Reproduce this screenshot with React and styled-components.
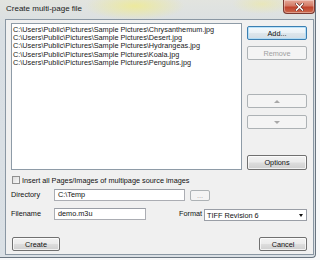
import React from 'react';
import styled, { createGlobalStyle, css } from 'styled-components';

const GlobalStyle = createGlobalStyle`
  html, body {
    margin: 0;
    padding: 0;
    background: #ffffff;
  }
  body {
    font-family: "Liberation Sans", Arial, sans-serif;
    color: #111;
  }
`;

const files = [
  'C:\\Users\\Public\\Pictures\\Sample Pictures\\Chrysanthemum.jpg',
  'C:\\Users\\Public\\Pictures\\Sample Pictures\\Desert.jpg',
  'C:\\Users\\Public\\Pictures\\Sample Pictures\\Hydrangeas.jpg',
  'C:\\Users\\Public\\Pictures\\Sample Pictures\\Koala.jpg',
  'C:\\Users\\Public\\Pictures\\Sample Pictures\\Penguins.jpg'
];

const Desktop = styled.div`
  width: 320px;
  height: 260px;
  overflow: hidden;
  background: #f7f8f9;
`;

const Window = styled.div`
  width: 316px;
  height: 258px;
  box-sizing: border-box;
  display: flex;
  flex-direction: column;
  border-right: 1px solid #6a7580;
  border-bottom: 1px solid #6a7580;
  border-bottom-right-radius: 4px;
  background:
    radial-gradient(ellipse 50px 14px at 135px 6px, rgba(238, 234, 150, 0.9), rgba(238, 234, 150, 0) 100%),
    radial-gradient(ellipse 30px 10px at 262px 4px, rgba(236, 232, 170, 0.7), rgba(236, 232, 170, 0) 100%),
    linear-gradient(#e2e4df, #d8dee3 30px, #dae0e5);
`;

const TitleBar = styled.div`
  height: 19px;
  display: flex;
  align-items: flex-start;
  padding-left: 6px;
  flex-shrink: 0;
`;

const Title = styled.span`
  font-size: 8px;
  line-height: 18px;
  color: #1a1a1a;
`;

const CloseButton = styled.div`
  margin-left: auto;
  width: 32px;
  height: 14px;
  box-sizing: border-box;
  border: 1px solid #7a3a32;
  border-top: none;
  border-radius: 0 0 4px 4px;
  background: linear-gradient(#e6a898, #d37a66 45%, #c0422c 55%, #cc6a4e);
  display: flex;
  align-items: center;
  justify-content: center;
  box-shadow: inset 0 0 0 1px rgba(255, 255, 255, 0.35);
`;

const Client = styled.div`
  flex: 1;
  margin: 0 1px 2px 5px;
  border: 1px solid #8a97a3;
  background: #f0f0f0;
  display: flex;
  flex-direction: column;
  padding: 3px 6px 3px 5px;
  font-size: 7.3px;
`;

const TopArea = styled.div`
  display: flex;
  gap: 5px;
  height: 147px;
`;

const FileList = styled.div`
  flex: 1;
  box-sizing: border-box;
  background: #ffffff;
  border: 1px solid #8e9ba7;
  padding: 2px 1px;
`;

const FileItem = styled.div`
  font-size: 7.3px;
  line-height: 8.2px;
  white-space: nowrap;
  color: #1a1a1a;
`;

const ButtonColumn = styled.div`
  width: 60px;
  display: flex;
  flex-direction: column;
`;

const Button = styled.div`
  box-sizing: border-box;
  flex-shrink: 0;
  height: ${p => p.$h || 14}px;
  width: ${p => (p.$w ? `${p.$w}px` : 'auto')};
  margin-top: ${p => (p.$top === 'auto' ? 'auto' : `${p.$top || 0}px`)};
  margin-left: ${p => p.$left || 0}px;
  border: 1px solid #707070;
  border-radius: 2px;
  background: linear-gradient(#f2f2f2, #ebebeb 48%, #dddddd 52%, #cfcfcf);
  box-shadow: inset 0 0 0 1px rgba(255, 255, 255, 0.7);
  display: flex;
  align-items: center;
  justify-content: center;
  font-size: 7.3px;
  color: #111;
  ${p =>
    p.$focused &&
    css`
      border-color: #3c7fb1;
      box-shadow: inset 0 0 0 1px rgba(170, 220, 250, 0.8);
      background: linear-gradient(#f4f9fc, #eaf1f6 48%, #dde6ec 52%, #d2dde5);
    `}
  ${p =>
    p.$disabled &&
    css`
      border-color: #adb2b5;
      background: #f4f4f4;
      color: #a0a0a0;
      box-shadow: none;
    `}
`;

const Arrow = styled.span`
  width: 0;
  height: 0;
  border-left: 3px solid transparent;
  border-right: 3px solid transparent;
  ${p =>
    p.$up
      ? css`border-bottom: 3px solid #a8a8a8;`
      : css`border-top: 3px solid #a8a8a8;`}
`;

const CheckRow = styled.div`
  display: flex;
  align-items: center;
  gap: 2px;
  margin-top: 6px;
  padding-left: 1px;
  height: 8px;
`;

const CheckBox = styled.span`
  width: 8px;
  height: 8px;
  box-sizing: border-box;
  border: 1px solid #8f8f8f;
  background: linear-gradient(135deg, #dcdcdc, #f8f8f8);
`;

const FieldRow = styled.div`
  display: flex;
  align-items: center;
  margin-top: ${p => p.$top}px;
`;

const Label = styled.span`
  width: ${p => (p.$w ? `${p.$w}px` : 'auto')};
  margin-left: ${p => p.$left || 0}px;
  font-size: 7.3px;
  color: #111;
  flex-shrink: 0;
  white-space: nowrap;
`;

const TextInput = styled.div`
  box-sizing: border-box;
  width: ${p => p.$w}px;
  height: 12px;
  background: #ffffff;
  border: 1px solid #abadb3;
  border-top-color: #9a9ea6;
  padding-left: 3px;
  font-size: 7.3px;
  line-height: 10px;
`;

const Select = styled.div`
  box-sizing: border-box;
  width: 104px;
  height: 12px;
  margin-left: 2px;
  margin-top: 3px;
  background: #ffffff;
  border: 1px solid #9a9ea6;
  padding: 0 3px 0 2px;
  display: flex;
  align-items: center;
  justify-content: space-between;
  font-size: 7.3px;
`;

const SelectArrow = styled.span`
  width: 0;
  height: 0;
  border-left: 2.5px solid transparent;
  border-right: 2.5px solid transparent;
  border-top: 3px solid #111;
`;

const Footer = styled.div`
  margin-top: auto;
  display: flex;
  justify-content: space-between;
  padding-left: 1px;
`;

export default function App() {
  return (
    <Desktop>
      <GlobalStyle />
      <Window>
        <TitleBar>
          <Title>Create multi-page file</Title>
          <CloseButton>
            <svg width="9" height="8" viewBox="0 0 9 8">
              <path d="M1.5 1 L7.5 7 M7.5 1 L1.5 7" stroke="#5a1a12" strokeWidth="2.6" strokeLinecap="square" />
              <path d="M1.5 1 L7.5 7 M7.5 1 L1.5 7" stroke="#ffffff" strokeWidth="1.6" strokeLinecap="square" />
            </svg>
          </CloseButton>
        </TitleBar>
        <Client>
          <TopArea>
            <FileList>
              {files.map(f => (
                <FileItem key={f}>{f}</FileItem>
              ))}
            </FileList>
            <ButtonColumn>
              <Button $top={3} $focused>Add...</Button>
              <Button $top={6} $disabled>Remove</Button>
              <Button $top={34} $disabled>
                <Arrow $up />
              </Button>
              <Button $top={7} $disabled>
                <Arrow />
              </Button>
              <Button $top="auto" $h={15}>Options</Button>
            </ButtonColumn>
          </TopArea>
          <CheckRow>
            <CheckBox />
            <span>Insert all Pages/Images of multipage source images</span>
          </CheckRow>
          <FieldRow $top={4}>
            <Label $w={43}>Directory</Label>
            <TextInput $w={131}>C:\Temp</TextInput>
            <Button $w={20} $h={11} $top={2} $left={5} $disabled>...</Button>
          </FieldRow>
          <FieldRow $top={5}>
            <Label $w={43}>Filename</Label>
            <TextInput $w={93}>demo.m3u</TextInput>
            <Label $left={33}>Format</Label>
            <Select>
              <span>TIFF Revision 6</span>
              <SelectArrow />
            </Select>
          </FieldRow>
          <Footer>
            <Button $w={48}>Create</Button>
            <Button $w={48}>Cancel</Button>
          </Footer>
        </Client>
      </Window>
    </Desktop>
  );
}
